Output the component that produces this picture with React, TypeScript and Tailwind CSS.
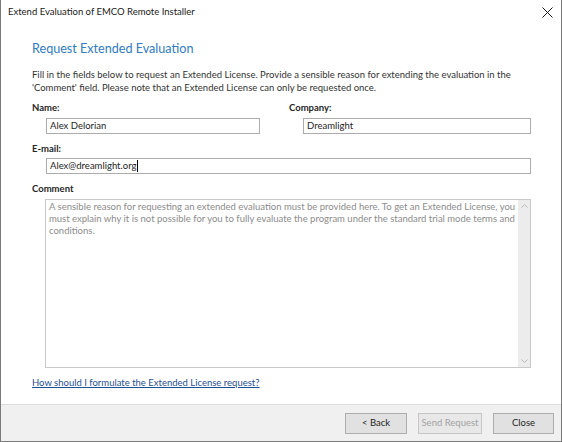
import React from "react";

const font = "font-['Lato','Open_Sans',sans-serif]";

function Label({ children }: { children: React.ReactNode }) {
  return <div className="h-[14px] text-[9.5px] leading-[14px] font-bold text-[#262626]">{children}</div>;
}

function Field({ value, caret, className }: { value: string; caret?: boolean; className?: string }) {
  return (
    <div
      className={
        "ml-[14px] flex h-[16px] items-center border border-[#acacac] bg-white pl-[3px] text-[9.5px] text-[#1e1e1e] " +
        (className ?? "")
      }
    >
      <span>{value}</span>
      {caret && <span className="ml-px h-[12px] w-px bg-black" />}
    </div>
  );
}

function Button({ label, width, disabled }: { label: string; width: string; disabled?: boolean }) {
  return (
    <div
      className={
        "flex h-[21px] items-center justify-center whitespace-nowrap border text-[9.5px] " +
        width +
        (disabled
          ? " border-[#c6c6c6] bg-[#e8e8e8] text-[#a3a3a3]"
          : " border-[#adadad] bg-[#e1e1e1] text-[#1e1e1e]")
      }
    >
      {label}
    </div>
  );
}

export default function App() {
  return (
    <div className={"flex h-[442px] w-[562px] flex-col border-x border-b border-[#7a7a7a] bg-white " + font}>
      {/* title bar */}
      <div className="flex h-[24px] items-center justify-between pl-[7px] pr-[7px]">
        <span className="text-[9.5px] text-[#1a1a1a]">Extend Evaluation of EMCO Remote Installer</span>
        <svg width="11" height="11" viewBox="0 0 11 11" className="mr-[1px]">
          <path d="M0.5 0.5 L10.5 10.5 M10.5 0.5 L0.5 10.5" stroke="#1a1a1a" strokeWidth="1" />
        </svg>
      </div>

      <div className="flex flex-1 flex-col pl-[31px] pr-[30px]">
        <div className="mt-[15px] h-[20px] whitespace-nowrap text-[12.6px] leading-[20px] text-[#2f7bc4]">
          Request Extended Evaluation
        </div>
        <p className="mt-[9px] whitespace-nowrap text-[9.5px] leading-[13px] text-[#333333]">
          Fill in the fields below to request an Extended License. Provide a sensible reason for extending the evaluation in the
          <br />
          'Comment' field. Please note that an Extended License can only be requested once.
        </p>

        <div className="mt-[7px] flex">
          <div className="w-[257px]">
            <Label>Name:</Label>
            <Field value="Alex Delorian" className="mt-[3px] w-[214px]" />
          </div>
          <div className="flex-1">
            <Label>Company:</Label>
            <Field value="Dreamlight" className="mt-[3px]" />
          </div>
        </div>

        <div className="mt-[8px]">
          <Label>E-mail:</Label>
          <Field value="Alex@dreamlight.org" caret className="mt-[2px]" />
        </div>

        <div className="mt-[8px]">
          <Label>Comment</Label>
          <div className="ml-[13px] mt-[3px] flex h-[169px] border border-[#c9c9c9] bg-white">
            <div className="flex-1 whitespace-nowrap px-[3px] pt-[1px] text-[9.5px] leading-[12px] text-[#8c8c8c]">
              A sensible reason for requesting an extended evaluation must be provided here. To get an Extended License, you
              <br />
              must explain why it is not possible for you to fully evaluate the program under the standard trial mode terms and
              <br />
              conditions.
            </div>
            <div className="flex w-[15px] flex-col items-center justify-between bg-[#ececec] py-[4px]">
              <svg width="7" height="4" viewBox="0 0 7 4">
                <path d="M0.5 3.5 L3.5 0.5 L6.5 3.5" stroke="#b8b8b8" fill="none" strokeWidth="1" />
              </svg>
              <svg width="7" height="4" viewBox="0 0 7 4">
                <path d="M0.5 0.5 L3.5 3.5 L6.5 0.5" stroke="#b8b8b8" fill="none" strokeWidth="1" />
              </svg>
            </div>
          </div>
        </div>

        <div className="mt-[8px] h-[14px] text-[9.5px] leading-[14px]">
          <a className="text-[#1f4f94] underline">How should I formulate the Extended License request?</a>
        </div>
      </div>

      {/* footer */}
      <div className="flex h-[37px] items-center justify-end gap-[11px] border-t border-[#dcdcdc] bg-[#f0f0f0] pr-[7px]">
        <Button label="< Back" width="w-[62px]" />
        <Button label="Send Request" width="w-[64px]" disabled />
        <Button label="Close" width="w-[61px]" />
      </div>
    </div>
  );
}
